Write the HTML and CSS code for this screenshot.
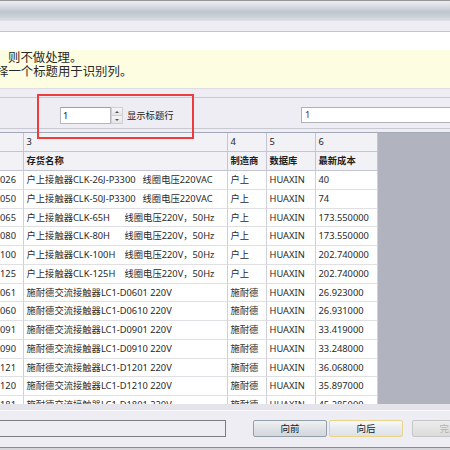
FILE: index.html
```html
<!DOCTYPE html>
<html lang="zh">
<head>
<meta charset="utf-8">
<title>导入</title>
<link rel="stylesheet" href="styles.css">
</head>
<body>
<div class="win">
  <div class="titlebar"></div>
  <div class="menustrip"></div>
  <div class="blank"></div>
  <div class="hint">
    <div class="l1">则不做处理。</div>
    <div class="l2">择一个标题用于识别列。</div>
  </div>
  <div class="gap"></div>
  <div class="toolbar">
    <div class="tb-left">
      <div class="spin">
        <div class="spin-input">1</div>
        <div class="spin-btns">
          <span class="sb up"><i class="tri-up"></i></span>
          <span class="sb down"><i class="tri-down"></i></span>
        </div>
      </div>
      <span class="lbl">显示标题行</span>
    </div>
    <div class="rinput">1</div>
  </div>
  <div class="gridgap"></div>
  <div class="grid">
    <div class="row head">
      <div class="c c1"></div><div class="c">3</div><div class="c">4</div><div class="c">5</div><div class="c">6</div>
    </div>
    <div class="row head bold">
      <div class="c c1"></div><div class="c">存货名称</div><div class="c">制造商</div><div class="c">数据库</div><div class="c">最新成本</div>
    </div>
    <div class="row"><div class="c c1">026</div><div class="c"><span>户上接触器CLK-26J-P3300</span><span class="sp">线圈电压220VAC</span></div><div class="c">户上</div><div class="c">HUAXIN</div><div class="c">40</div></div>
    <div class="row"><div class="c c1">050</div><div class="c"><span>户上接触器CLK-50J-P3300</span><span class="sp">线圈电压220VAC</span></div><div class="c">户上</div><div class="c">HUAXIN</div><div class="c">74</div></div>
    <div class="row"><div class="c c1">065</div><div class="c"><span class="w98">户上接触器CLK-65H</span><span>线圈电压220V，50Hz</span></div><div class="c">户上</div><div class="c">HUAXIN</div><div class="c">173.550000</div></div>
    <div class="row"><div class="c c1">080</div><div class="c"><span class="w98">户上接触器CLK-80H</span><span>线圈电压220V，50Hz</span></div><div class="c">户上</div><div class="c">HUAXIN</div><div class="c">173.550000</div></div>
    <div class="row"><div class="c c1">100</div><div class="c"><span class="w98">户上接触器CLK-100H</span><span>线圈电压220V，50Hz</span></div><div class="c">户上</div><div class="c">HUAXIN</div><div class="c">202.740000</div></div>
    <div class="row"><div class="c c1">125</div><div class="c"><span class="w98">户上接触器CLK-125H</span><span>线圈电压220V，50Hz</span></div><div class="c">户上</div><div class="c">HUAXIN</div><div class="c">202.740000</div></div>
    <div class="row"><div class="c c1">061</div><div class="c">施耐德交流接触器LC1-D0601 220V</div><div class="c">施耐德</div><div class="c">HUAXIN</div><div class="c">26.923000</div></div>
    <div class="row"><div class="c c1">060</div><div class="c">施耐德交流接触器LC1-D0610 220V</div><div class="c">施耐德</div><div class="c">HUAXIN</div><div class="c">26.931000</div></div>
    <div class="row"><div class="c c1">091</div><div class="c">施耐德交流接触器LC1-D0901 220V</div><div class="c">施耐德</div><div class="c">HUAXIN</div><div class="c">33.419000</div></div>
    <div class="row"><div class="c c1">090</div><div class="c">施耐德交流接触器LC1-D0910 220V</div><div class="c">施耐德</div><div class="c">HUAXIN</div><div class="c">33.248000</div></div>
    <div class="row"><div class="c c1">121</div><div class="c">施耐德交流接触器LC1-D1201 220V</div><div class="c">施耐德</div><div class="c">HUAXIN</div><div class="c">36.068000</div></div>
    <div class="row"><div class="c c1">120</div><div class="c">施耐德交流接触器LC1-D1210 220V</div><div class="c">施耐德</div><div class="c">HUAXIN</div><div class="c">35.897000</div></div>
    <div class="row"><div class="c c1">181</div><div class="c">施耐德交流接触器LC1-D1801 220V</div><div class="c">施耐德</div><div class="c">HUAXIN</div><div class="c">45.285000</div></div>
  </div>
  <div class="gridfoot"></div>
  <div class="footer">
    <div class="status"></div>
    <button class="btn prev">向前</button>
    <button class="btn hot">向后</button>
    <button class="btn dis">完成</button>
  </div>
  <div class="bottomline"></div>
  <div class="annot"></div>
</div>
</body>
</html>
```
FILE: styles.css
```css
html, body {
  margin: 0;
  padding: 0;
}
body {
  width: 450px;
  height: 450px;
  overflow: hidden;
  background: #eeedf3;
  font-family: "Noto Sans", "Noto Sans CJK SC", sans-serif;
  font-size: 9.3px;
  color: #222;
}
.win {
  position: relative;
  width: 450px;
  height: 450px;
  overflow: hidden;
  display: flex;
  flex-direction: column;
}
.win > div { flex-shrink: 0; }
.titlebar {
  height: 20px;
  border-top: 1px solid #979797;
  background: linear-gradient(#eceef2 0%, #d6dae0 30%, #bfc5ce 55%, #cdd2d9 80%, #dde0e6 100%);
}
.menustrip {
  height: 10px;
  background: #eeedf3;
  border-bottom: 1px solid #c4c4ce;
}
.blank {
  height: 18px;
  background: #fff;
}
.hint {
  height: 38px;
  background: #fdfde1;
  border-bottom: 1px solid #dedee2;
  font-family: "Noto Sans CJK SC", sans-serif;
  font-size: 12.4px;
  line-height: 14px;
  color: #2a2a2a;
  white-space: nowrap;
  overflow: hidden;
}
.l1 { padding-left: 8px; }
.l2 { margin-left: -4px; }
.gap {
  height: 8px;
  background: #eeedf3;
  border-bottom: 1px solid #c9c9d2;
}
.toolbar {
  height: 30px;
  border-bottom: 1px solid #c9c9d2;
  display: flex;
  align-items: flex-start;
  padding-top: 9px;
  box-sizing: border-box;
  height: 31px;
  overflow: hidden;
}
.tb-left {
  flex: 0 0 301px;
  box-sizing: border-box;
  padding-left: 60px;
  display: flex;
  align-items: center;
}
.spin {
  display: flex;
  height: 17px;
}
.spin-input {
  width: 51px;
  height: 17px;
  box-sizing: border-box;
  border: 1px solid #b4b7bf;
  border-top-color: #9c9fa6;
  background: #fff;
  padding-left: 2px;
  line-height: 15px;
  color: #1a1a1a;
}
.spin-btns {
  width: 12px;
  display: flex;
  flex-direction: column;
}
.sb {
  flex: 1;
  box-sizing: border-box;
  border: 1px solid #cfd0d4;
  background: linear-gradient(#f7f7f8, #e4e4e7);
  display: flex;
  align-items: center;
  justify-content: center;
}
.sb.down { border-top: none; }
.tri-up, .tri-down {
  width: 0;
  height: 0;
  border-left: 2px solid transparent;
  border-right: 2px solid transparent;
}
.tri-up { border-bottom: 2px solid #555; }
.tri-down { border-top: 2px solid #555; }
.lbl {
  margin-left: 4px;
  font-size: 9.3px;
  color: #1a1a1a;
  line-height: 17px;
}
.rinput {
  flex: 0 0 170px;
  height: 16px;
  box-sizing: border-box;
  border: 1px solid #b0b2ba;
  background: #fff;
  padding-left: 3px;
  line-height: 14px;
  color: #4a1f55;
}
.gridgap { height: 3px; }
.grid {
  height: 271px;
  border-top: 1px solid #a3a8b6;
  background: #b1b4be;
  overflow: hidden;
}
.row {
  display: grid;
  grid-template-columns: 24px 204px 39px 49px 62px;
  width: 378px;
  height: 18.75px;
  background: #fff;
}
.row.head {
  height: 19px;
  background: #f1f1f6;
}
.c {
  box-sizing: border-box;
  border-right: 1px solid #cfd0d8;
  border-bottom: 1px solid #e0e0e4;
  padding-left: 2.5px;
  white-space: nowrap;
  overflow: hidden;
  line-height: 17.75px;
  color: #2a2a2a;
}
.head .c {
  border-right-color: #c3c5d2;
  border-bottom-color: #c3c5d2;
  line-height: 18px;
  color: #1e1e1e;
}
.bold .c { font-weight: bold; }
.c1 {
  text-align: right;
  padding-left: 0;
  padding-right: 9px;
}
.w98 {
  display: inline-block;
  width: 98px;
}
.sp { margin-left: 7px; }
.gridfoot {
  height: 6px;
  background: #e4e4ea;
  border-bottom: 1px solid #f8f8fb;
}
.footer {
  height: 36px;
  box-sizing: border-box;
  padding-top: 9px;
  display: flex;
  align-items: flex-start;
  background: #eeedf3;
}
.status {
  width: 228px;
  height: 17px;
  margin-left: -2px;
  box-sizing: border-box;
  border: 1px solid #7c7c7c;
  background: #eeedf3;
  flex-shrink: 0;
}
.btn {
  flex: 0 0 74px;
  height: 17px;
  box-sizing: border-box;
  margin: 0;
  padding: 0;
  border: 1px solid #949ea9;
  border-radius: 2px;
  background: linear-gradient(#f0f1f3, #dfe2e6 50%, #d3d8dd);
  font-family: "Noto Sans CJK SC", sans-serif;
  font-size: 9.5px;
  line-height: 15px;
  color: #1a1a1a;
  text-align: center;
}
.prev { margin-left: 27px; }
.hot {
  margin-left: 2px;
  border-color: #e8d48a;
  background: linear-gradient(#f7f8f9, #e8ebee 50%, #dde2e6);
}
.dis {
  margin-left: 9px;
  border-color: #c6c6c6;
  background: linear-gradient(#ececec, #dcdcdc);
  color: #b4b4b4;
}
.bottomline {
  height: 2px;
  border-top: 1px solid #8c8c8c;
  background: #d5d5da;
}
.annot {
  position: absolute;
  left: 37px;
  top: 94px;
  width: 157px;
  height: 45px;
  box-sizing: border-box;
  border: 2px solid #ee3b3b;
}
```
